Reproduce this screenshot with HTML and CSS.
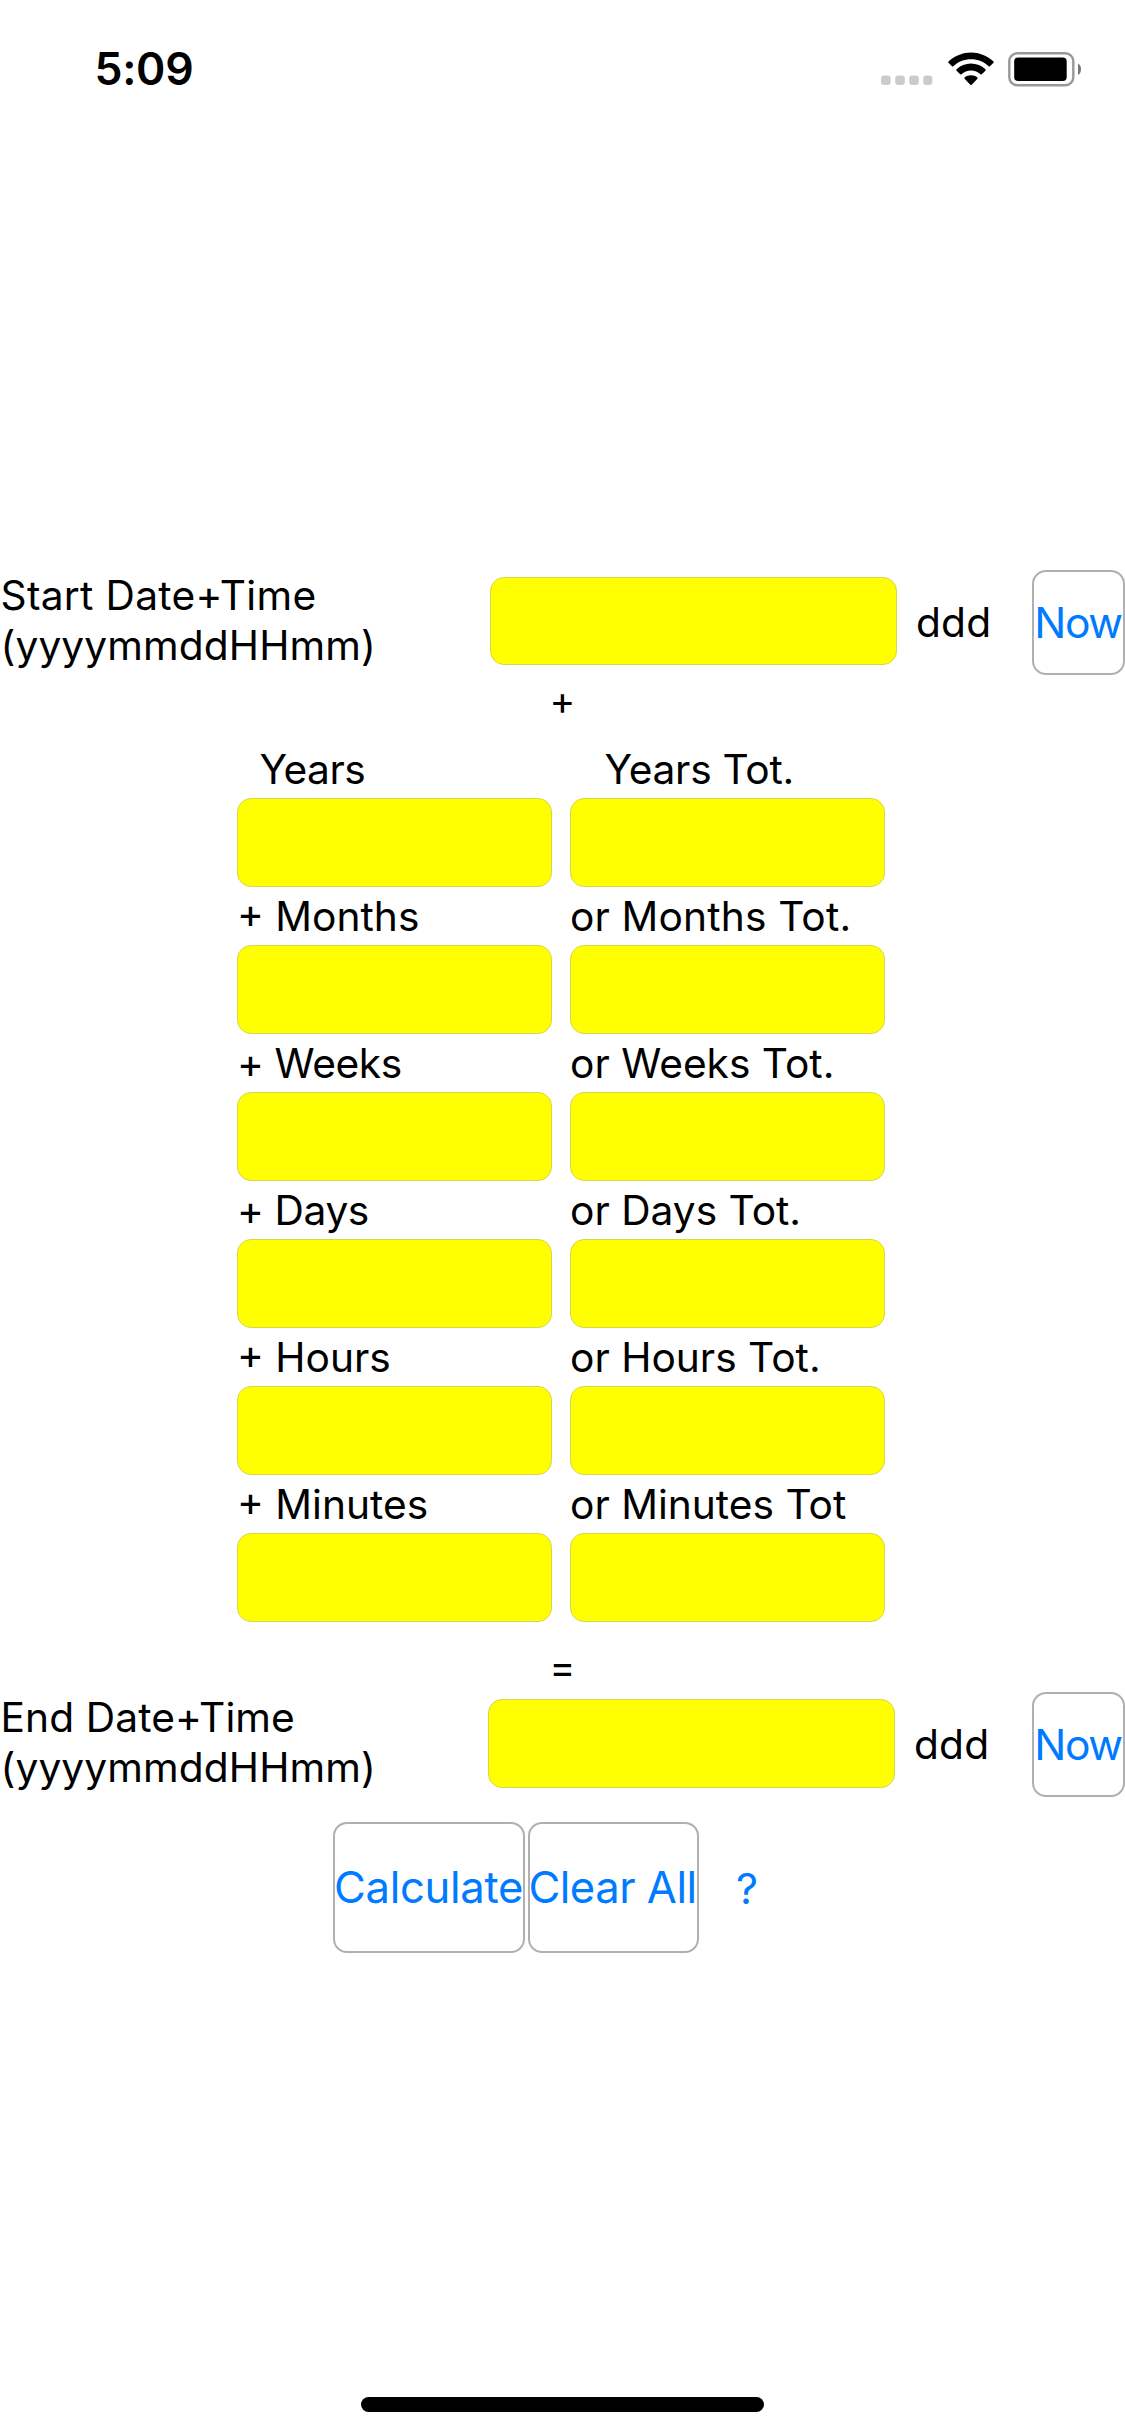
FILE: index.html
```html
<!DOCTYPE html>
<html lang="en">
<head>
<meta charset="utf-8">
<title>Date and time calculator</title>
<link rel="stylesheet" href="styles.css">
</head>
<body>
<div class="screen">
  <header class="status">
    <span class="clock">5:09</span>
    <div class="indicators">
      <svg class="dots" width="52" height="11" viewBox="0 0 52 11" fill="#cbcbcb">
        <rect x="0" y="0.5" width="9.6" height="9.6" rx="3"/>
        <rect x="14.2" y="0.5" width="9.6" height="9.6" rx="3"/>
        <rect x="28.2" y="0.5" width="9.6" height="9.6" rx="3"/>
        <rect x="42.2" y="0.5" width="9.2" height="9.6" rx="3"/>
      </svg>
      <svg class="wifi" width="46" height="34" viewBox="0 0 46 34" fill="#000">
        <path d="M23 0.4C31.6 0.4 39.6 3.8 45.5 9.5C45.9 9.9 45.9 10.4 45.5 10.8L42 14.3C41.6 14.7 41.1 14.7 40.7 14.3C36 9.8 29.8 7.2 23 7.2S10 9.8 5.3 14.3C4.9 14.7 4.4 14.7 4 14.3L0.5 10.8C0.1 10.4 0.1 9.9 0.5 9.5C6.4 3.8 14.4 0.4 23 0.4Z"/>
        <path d="M23 11.6C28.5 11.6 33.6 13.7 37.4 17.3C37.8 17.7 37.8 18.3 37.4 18.7L33.8 22.2C33.4 22.6 32.9 22.6 32.5 22.3C30 20 26.7 18.6 23 18.6S16 20 13.5 22.3C13.1 22.6 12.6 22.6 12.2 22.2L8.6 18.7C8.2 18.3 8.2 17.7 8.6 17.3C12.4 13.7 17.5 11.6 23 11.6Z"/>
        <path d="M23 23.2C25.5 23.2 27.7 24.1 29.4 25.5C29.8 25.9 29.8 26.4 29.4 26.8L23.7 32.8C23.3 33.2 22.7 33.2 22.3 32.8L16.6 26.8C16.2 26.4 16.2 25.9 16.6 25.5C18.3 24.1 20.5 23.2 23 23.2Z"/>
      </svg>
      <svg class="battery" width="74" height="35" viewBox="0 0 74 35">
        <rect x="1.3" y="1.3" width="64" height="32" rx="8" fill="none" stroke="#999" stroke-width="2.4"/>
        <rect x="6.2" y="5.6" width="52.5" height="23.4" rx="4" fill="#000"/>
        <path d="M70 11.5C72 12.4 73 14.6 73 17.2S72 22 70 23Z" fill="#777"/>
      </svg>
    </div>
  </header>

  <main>
    <section class="date-row">
      <div class="date-label"><div class="start-title">Start Date+Time</div><div class="format">(yyyymmddHHmm)</div></div>
      <div class="field date-field"></div>
      <span class="weekday">ddd</span>
      <div class="button now">Now</div>
    </section>

    <div class="operator">+</div>

    <section class="units">
      <div class="unit first"><div class="unit-label">Years</div><div class="field"></div></div>
      <div class="unit first total"><div class="unit-label">Years Tot.</div><div class="field"></div></div>
      <div class="unit"><div class="unit-label">+ Months</div><div class="field"></div></div>
      <div class="unit"><div class="unit-label wide">or Months Tot.</div><div class="field"></div></div>
      <div class="unit"><div class="unit-label tight">+ Weeks</div><div class="field"></div></div>
      <div class="unit"><div class="unit-label">or Weeks Tot.</div><div class="field"></div></div>
      <div class="unit"><div class="unit-label tight">+ Days</div><div class="field"></div></div>
      <div class="unit"><div class="unit-label">or Days Tot.</div><div class="field"></div></div>
      <div class="unit"><div class="unit-label">+ Hours</div><div class="field"></div></div>
      <div class="unit"><div class="unit-label">or Hours Tot.</div><div class="field"></div></div>
      <div class="unit"><div class="unit-label">+ Minutes</div><div class="field"></div></div>
      <div class="unit"><div class="unit-label">or Minutes Tot</div><div class="field"></div></div>
    </section>

    <div class="operator equals">=</div>

    <section class="date-row end">
      <div class="date-label"><div class="end-title">End Date+Time</div><div class="format">(yyyymmddHHmm)</div></div>
      <div class="field date-field"></div>
      <span class="weekday">ddd</span>
      <div class="button now">Now</div>
    </section>

    <section class="actions">
      <div class="button calculate">Calculate</div>
      <div class="button clear">Clear All</div>
      <span class="help">?</span>
    </section>
  </main>

  <div class="home-bar"></div>
</div>
</body>
</html>
```
FILE: styles.css
```css
* { box-sizing: border-box; }

body {
  margin: 0;
  background: #fff;
  color: #000;
  font-family: Inter, "Liberation Sans", sans-serif;
  font-size: 40.7px;
  line-height: 50px;
}

.screen {
  display: flex;
  flex-direction: column;
  width: 1125px;
  height: 2436px;
  overflow: hidden;
  white-space: nowrap;
}

/* Status bar */
.status {
  display: flex;
  justify-content: space-between;
  align-items: flex-start;
  height: 570px;
  padding: 42px 43px 0 94.5px;
}

.clock {
  font-size: 44.5px;
  font-weight: 600;
  line-height: 54px;
  letter-spacing: -0.3px;
}

.indicators {
  display: flex;
  align-items: flex-start;
  padding-top: 10px;
}

.dots { margin: 23px 15px 0 0; }
.wifi { margin-right: 14px; }

/* Start and end rows */
.date-row {
  display: flex;
  align-items: flex-start;
  height: 105px;
}

.date-label {
  width: 490px;
  padding: 1px 0 0 0.5px;
}

.start-title { letter-spacing: 0.3px; }
.end-title { letter-spacing: 0.1px; }
.format { letter-spacing: 0.1px; }

.field {
  height: 89px;
  border: 1px solid #d6d650;
  border-radius: 14px;
  background: #ff0;
}

.date-field {
  width: 407px;
  height: 88px;
  margin-top: 7px;
}

.weekday {
  width: 116px;
  margin: 28px 0 0 19px;
  letter-spacing: 0.2px;
}

.end {
  margin-top: 1px;
}

.end .date-label { width: 488px; }
.end .date-field { height: 89px; }
.end .weekday { width: 118px; }

.operator {
  height: 50px;
  padding: 1px 0 0 549.5px;
  font-size: 39px;
}

.equals { margin-top: 19px; }

/* Duration grid */
.units {
  display: grid;
  grid-template-columns: 315px 315px;
  column-gap: 18px;
  row-gap: 3px;
  padding: 18px 0 0 237px;
}

.unit-label {
  height: 50px;
  margin-bottom: 5px;
  padding-top: 2px;
}

.first .unit-label {
  padding-left: 22.5px;
  letter-spacing: -0.5px;
}

.total .unit-label {
  padding-left: 34.5px;
  letter-spacing: -0.28px;
}

.wide { letter-spacing: 0.15px; }
.tight { letter-spacing: -0.4px; }

/* Buttons */
.button {
  display: flex;
  justify-content: center;
  align-items: center;
  padding-top: 1px;
  border: 2px solid #b0b0b0;
  border-radius: 14px;
  color: #007aff;
  font-size: 43.6px;
}

.now {
  width: 93px;
  height: 105px;
  padding-right: 1px;
  font-size: 42.5px;
  letter-spacing: -1.4px;
}

.actions {
  display: flex;
  align-items: center;
  height: 131px;
  margin-top: 25px;
  padding-left: 333px;
}

.calculate {
  width: 192px;
  height: 131px;
  padding-right: 1px;
  letter-spacing: -0.3px;
}

.clear {
  width: 171px;
  height: 131px;
  margin-left: 3px;
  padding-right: 2px;
  letter-spacing: -0.5px;
}

.help {
  margin-left: 37px;
  color: #007aff;
  font-size: 43px;
}

/* Home indicator */
.home-bar {
  width: 403px;
  height: 15px;
  margin: auto auto 24px 361px;
  border-radius: 8px;
  background: #000;
}
```
